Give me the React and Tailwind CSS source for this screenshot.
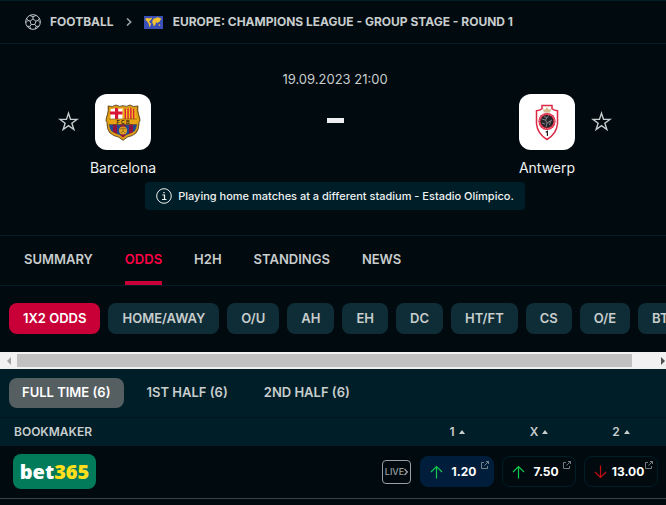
import React, { useState } from 'react';
import clsx from 'clsx';

const tabs = ['Summary', 'Odds', 'H2H', 'Standings', 'News'];
const markets = ['1X2 odds', 'Home/Away', 'O/U', 'AH', 'EH', 'DC', 'HT/FT', 'CS', 'O/E', 'BTS'];
const periods = ['Full time (6)', '1st half (6)', '2nd half (6)'];

const odds = [
  { label: '1', value: '1.20', rising: true, best: true },
  { label: 'X', value: '7.50', rising: true },
  { label: '2', value: '13.00', rising: false },
];

function BallIcon() {
  return (
    <svg viewBox="0 0 20 20" className="size-4 shrink-0" fill="none" stroke="#c8cdcd" strokeWidth="1.2">
      <circle cx="10" cy="10" r="9.2" />
      <path d="M10 6.2l3.7 2.7-1.4 4.3H7.7L6.3 8.9z" />
      <path d="M10 6.2V3.6M13.7 8.9l2.6-.9M12.3 13.2l1.7 2.3M7.7 13.2L6 15.5M6.3 8.9L3.7 8" />
      <path d="M6.4 1.8L10 3.6l3.6-1.8M18.2 5.4L16.3 8l2.8 3M17.3 15.3L14 15.5l-1.2 3.3M7.2 18.8L6 15.5l-3.3-.2M.9 11l2.8-3-1.9-2.6" />
    </svg>
  );
}

function WorldFlag() {
  return (
    <svg viewBox="0 0 19 13" className="w-[19px] h-[13px] shrink-0">
      <path fill="#3a4fb8" d="M0 0h19v13H0z" />
      <path
        fill="#f5c332"
        d="M1.5 2.5l2-.6 2 .6 1.8-.9.7.6L6.4 4.4 5 5.6l.7 1 1.5 1-.6 1.5-.9 1.8-.7-.7-.2-2.4-1-1.3L2.9 5 1.5 4zM8.6 4.2l1.2-1.7 1.7-.3 1.8-.9 2.9.7 1.2 1-1.2 1.3-.7 1.6-1.3.3-.5 1.2-.9-1.2-.9.3-.2 1.6-1.3 1.9-.9-.3-.3-2-1-.8.2-1.4zM14.6 8.2l1.5.2.2 1.3-1.5.1z"
      />
    </svg>
  );
}

function StarIcon() {
  return (
    <svg viewBox="0 0 21 21" className="size-[21px]" fill="none" stroke="#c8cdcd" strokeWidth="1.4" strokeLinejoin="miter">
      <path d="M10.5 2.2l2.05 6.15H19.1l-5.25 3.9 2 6.3-5.35-3.85-5.35 3.85 2-6.3-5.25-3.9H8.45z" />
    </svg>
  );
}

function BarcelonaCrest() {
  return (
    <svg viewBox="0 0 36 37" className="w-9 h-[37px]">
      <defs>
        <clipPath id="barca">
          <path d="M4 3.2q4 1.3 7-.9 3.5 2.3 7 .5 3.5 1.8 7-.5 3 2.2 7 .9-.4 4 .8 7.3l1.2 4.5q.5 2-1 3 .5 6-2.5 10-4 3.2-8.5 4L18 35l-4-3q-4.5-.8-8.5-4-3-4-2.5-10-1.5-1-1-3l1.2-4.5Q4.4 7.2 4 3.2z" />
        </clipPath>
      </defs>
      <g clipPath="url(#barca)">
        <path fill="#e9a513" d="M0 0h36v37H0z" />
        <path fill="#fff" d="M5.5 3.5h12V15h-12z" />
        <path fill="#d71635" d="M10 2h3.2v13H10zM5 7.5h12.5v3H5z" />
        <path fill="#f5c21b" d="M18.5 3.5h12V15h-12z" />
        <path fill="#d5233a" d="M19.5 3H21v12h-1.5zM22.3 3h1.5v12h-1.5zM25.1 3h1.5v12h-1.5zM27.9 3h1.5v12h-1.5z" />
        <path fill="#214a91" d="M4 20.5h28V34H4z" />
        <path fill="#8f1541" d="M8 20.5h4V34H8zM15.5 20.5h5V34h-5zM24 20.5h4V34h-4z" />
        <circle cx="18" cy="26.5" r="4" fill="#dca323" />
        <path d="M15 25l3-1 3 1M16 29l2-2 2 2M18 24v3" stroke="#8a5a12" strokeWidth=".7" fill="none" />
      </g>
      <path
        d="M4 3.2q4 1.3 7-.9 3.5 2.3 7 .5 3.5 1.8 7-.5 3 2.2 7 .9-.4 4 .8 7.3l1.2 4.5q.5 2-1 3 .5 6-2.5 10-4 3.2-8.5 4L18 35l-4-3q-4.5-.8-8.5-4-3-4-2.5-10-1.5-1-1-3l1.2-4.5Q4.4 7.2 4 3.2z"
        fill="none"
        stroke="#dc9c16"
        strokeWidth="2.4"
      />
      <path
        d="M3.2 2q4.3 1.5 7.8-1 3.5 2.3 7 .7 3.5 1.6 7-.7 3.5 2.5 7.8 1-.6 5 .7 8.3l1.3 4.7q.5 2.5-.8 3.5.3 6.5-3 10.5-3.5 3.2-8.5 4L18 36.3 13.500 33q-5-.8-8.500-4-3.300-4-3-10.500-1.300-1-.8-3.500l1.300-4.700Q3.800 7 3.200 2z"
        fill="none"
        stroke="#4a3a28"
        strokeWidth=".8"
      />
      <path d="M4 15h28M4 20.5h28" stroke="#6b4a1a" strokeWidth=".6" />
      <text x="18" y="19.5" textAnchor="middle" className="font-['Liberation_Sans'] text-[5px] font-bold" fill="#2b2112">F C B</text>
    </svg>
  );
}

function AntwerpCrest() {
  return (
    <svg viewBox="0 0 24 37" className="w-6 h-[37px]">
      <path
        d="M7 1.5h10v3.3q2 1.9 5.5 2v13Q21.5 30 12 35.5 2.5 30 1.5 19.8v-13q3.5-.1 5.5-2z"
        fill="#fff"
        stroke="#dc2742"
        strokeWidth="1.5"
      />
      <path d="M8.7 8.5L8 4.8l2 .9 2-2.7 2 2.7 2-.9-.7 3.7z" fill="#d3bd91" />
      <circle cx="12" cy="17.3" r="8.6" fill="#dc2742" />
      <circle cx="12" cy="17.3" r="7.4" fill="none" stroke="#f3a5b0" strokeWidth=".8" strokeDasharray="1 .8" />
      <circle cx="12" cy="17.3" r="6.4" fill="#25252a" />
      <path d="M6.5 15l4 1 3-4.5M10.5 16l1.5 3 5-3M12 19l-1 4M7 19l3 1M14.5 21l1-4M9 12.5l3 1.5" stroke="#a9aaad" strokeWidth=".7" fill="none" />
      <path d="M10.7 28.3l1.7-1V32" fill="none" stroke="#222" strokeWidth="1.2" />
    </svg>
  );
}

function TrendArrow({ rising }) {
  return (
    <svg
      viewBox="0 0 13 14"
      className={clsx('w-[13px] h-[14px] shrink-0', rising ? 'text-[#12c84e]' : 'text-[#c80d12]')}
      fill="none"
      stroke="currentColor"
      strokeWidth="1.2"
    >
      <path d={rising ? 'M6.5 13.5V1.5M1 7l5.5-5.5L12 7' : 'M6.5.5v12M1 7l5.5 5.5L12 7'} />
    </svg>
  );
}

function ExternalIcon() {
  return (
    <svg viewBox="0 0 8 8" className="absolute top-1 right-1 size-2" fill="none" stroke="#8f999c" strokeWidth=".8">
      <path d="M3 1.5H.5v6h6V5M5 .5h2.5V3M7.5.5l-4 4" />
    </svg>
  );
}

function Team({ name, crest, away }) {
  return (
    <div className={clsx('flex items-start gap-1', away && 'flex-row-reverse')}>
      <button aria-label={`Add ${name} to favourites`} className="mt-[17px]">
        <StarIcon />
      </button>
      <div className="flex w-20 flex-col items-center gap-2">
        <div className="flex size-14 items-center justify-center rounded-xl bg-white">{crest}</div>
        <a href="#team" className="text-sm leading-5 text-[#eef1f1]">{name}</a>
      </div>
    </div>
  );
}

export default function App() {
  const [tab, setTab] = useState('Odds');
  const [market, setMarket] = useState('1X2 odds');
  const [period, setPeriod] = useState('Full time (6)');

  return (
    <div className="min-h-screen overflow-hidden bg-[#010a0f] font-['Inter',sans-serif] text-[#c8cdcd]">
      {/* Breadcrumb */}
      <nav className="flex h-11 items-center border-y border-[#001e28] pl-[25px] text-xs font-bold uppercase whitespace-nowrap">
        <BallIcon />
        <a href="#football" className="ml-[9px]">Football</a>
        <svg viewBox="0 0 6 8" className="mx-3 w-1.5 h-2" fill="none" stroke="#9ba3a5" strokeWidth="1.6">
          <path d="M1 .5L4.7 4 1 7.5" />
        </svg>
        <WorldFlag />
        <a href="#league" className="ml-2.5">Europe: Champions League - Group Stage - Round 1</a>
      </nav>

      {/* Match header */}
      <header className="flex h-[191px] flex-col items-center pt-[25px]">
        <div className="pl-1 text-[13px] leading-5">19.09.2023 21:00</div>
        <div className="mt-[5px] flex w-full items-start justify-between pr-[54px] pl-[58px]">
          <Team name="Barcelona" crest={<BarcelonaCrest />} />
          <div className="mt-6 h-[5px] w-[17px] bg-[#eceef2]" />
          <Team name="Antwerp" crest={<AntwerpCrest />} away />
        </div>
        <div className="mt-1 ml-1 flex h-7 items-center gap-1.5 rounded bg-[#001e28] px-[11px] text-[11px] font-medium text-[#eef1f1]">
          <svg viewBox="0 0 16 16" className="size-4" fill="none" stroke="currentColor">
            <circle cx="8" cy="8" r="7.3" />
            <path d="M6.3 7h2.2v4.5M6 11.5h4.5" strokeWidth="1.2" />
            <path d="M7.3 4h1.4v1.3H7.3z" fill="currentColor" stroke="none" />
          </svg>
          <span>Playing home matches at a different stadium - Estadio Olímpico.</span>
        </div>
      </header>

      {/* Detail tabs */}
      <nav className="flex h-[51px] gap-8 border-y border-[#001e28] pl-6 text-[13px] font-semibold">
        {tabs.map(item => (
          <button
            key={item}
            onClick={() => setTab(item)}
            className={clsx('h-[49px] border-b-4 pt-0.5 uppercase', tab === item ? 'rounded-t-xs border-[#c80037] text-[#ff0046]' : 'border-transparent')}
          >
            {item}
          </button>
        ))}
      </nav>

      {/* Markets */}
      <div className="flex h-[66px] gap-2 overflow-hidden pt-[17px] pl-[9px] text-[13px] font-semibold">
        {markets.map(item => (
          <button
            key={item}
            onClick={() => setMarket(item)}
            className={clsx('h-[31px] shrink-0 rounded-lg px-3.5 uppercase', market === item ? 'bg-[#c80037] text-white' : 'bg-[#0f2d37]')}
          >
            {item}
          </button>
        ))}
      </div>
      <div className="flex h-[17px] items-center bg-[#f1f1f1]">
        <button aria-label="Scroll left" className="flex w-[17px] justify-center">
          <svg viewBox="0 0 4 8" className="w-1 h-2"><path d="M4 0v8L0 4z" fill="#a3a3a3" /></svg>
        </button>
        <div className="h-[13px] flex-1 bg-[#c1c1c1]" />
        <button aria-label="Scroll right" className="flex w-[34px] justify-end">
          <svg viewBox="0 0 4 8" className="mr-px w-1 h-2"><path d="M0 0v8l4-4z" fill="#505050" /></svg>
        </button>
      </div>

      {/* Periods */}
      <div className="flex h-12 items-center gap-2.5 bg-[#001e28] pl-[9px] text-[13px] font-semibold">
        {periods.map(item => (
          <button
            key={item}
            onClick={() => setPeriod(item)}
            className={clsx('h-[30px] rounded-lg px-[13px] uppercase', period === item && 'bg-[#555e61] text-white')}
          >
            {item}
          </button>
        ))}
      </div>

      {/* Bookmaker odds */}
      <table className="w-full border-t border-[#00141c] text-left">
        <thead>
          <tr className="h-7 bg-[#001e28] text-xs">
            <th className="pl-3.5 font-semibold">BOOKMAKER</th>
            <th className="w-[38px]" />
            {odds.map(odd => (
              <th key={odd.label} className="w-[82px] font-semibold">
                <span className="flex items-center justify-center gap-1 pr-2">
                  {odd.label}
                  <svg viewBox="0 0 6 4" className="w-1.5 h-1"><path d="M3 0l3 4H0z" fill="currentColor" /></svg>
                </span>
              </th>
            ))}
          </tr>
        </thead>
        <tbody>
          <tr className="h-[53px] border-b border-[#3a4143]">
            <td className="pl-[13px]">
              <a href="#bet365" className="flex h-[35px] w-[83px] items-center justify-center rounded-lg bg-[#027b5b] font-['Open_Sans',sans-serif] text-xl font-extrabold text-white">
                bet<span className="text-[#ffdf1b]">365</span>
              </a>
            </td>
            <td>
              <a href="#live" className="flex h-6 w-[29px] items-center justify-center rounded border border-[#9a9fa1] text-[9px] font-medium text-[#9a9fa1]">
                LIVE
                <svg viewBox="0 0 4 8" className="w-1 h-2" fill="none" stroke="currentColor" strokeWidth="1.2"><path d="M.5 1L3.3 4 .5 7" /></svg>
              </a>
            </td>
            {odds.map(odd => (
              <td key={odd.label} className="pr-2">
                <button
                  className={clsx(
                    'relative flex h-[31px] w-full items-center rounded-lg border pr-2 pl-[9px] text-xs font-bold text-white',
                    odd.best ? 'border-[#001e3c] bg-[#001e3c]' : 'border-[#001e28]'
                  )}
                >
                  <TrendArrow rising={odd.rising} />
                  <span className="flex-1 text-center">{odd.value}</span>
                  <ExternalIcon />
                </button>
              </td>
            ))}
          </tr>
        </tbody>
      </table>
    </div>
  );
}
